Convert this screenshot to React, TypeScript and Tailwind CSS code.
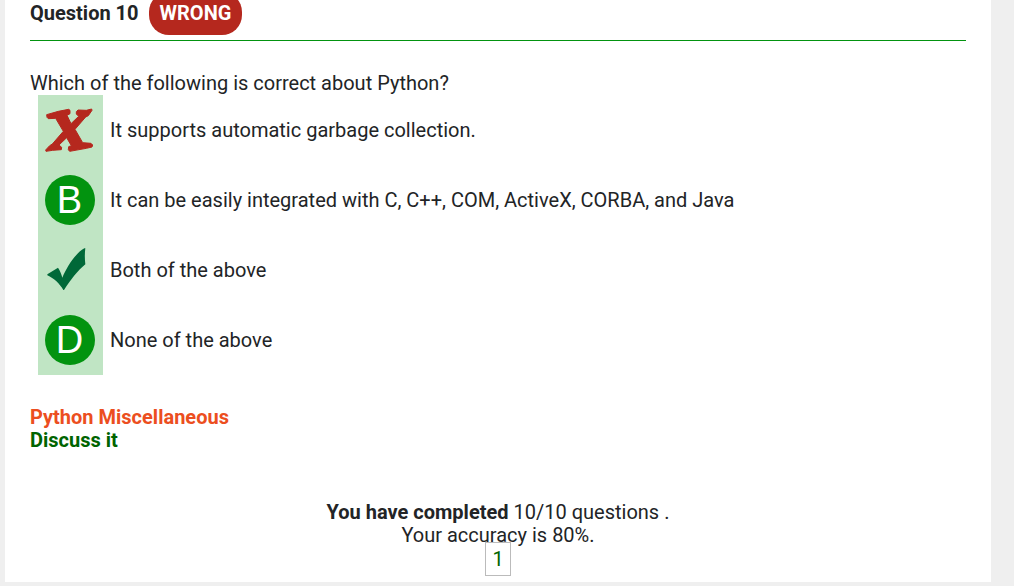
import type { ReactNode } from "react";

function CrossMark() {
  return (
    <svg viewBox="0 0 195 210" className="h-[70px] w-[65px]" role="img" aria-label="Your answer, wrong">
      <path
        fill="#b5281e"
        stroke="#b5281e"
        strokeWidth="3"
        strokeLinejoin="round"
        d="M26 59 L61 49 L92 43 L96 46 L96 56 L87 61 L99 86 L122 64 L115 57 L115 50 L120 45 L145 46 L161 42 L162 46 L151 62 L143 66 L111 103 L134 143 L159 145 L164 150 L162 156 L145 160 L95 169 L91 164 L92 155 L100 152 L86 128 L63 150 L71 157 L70 164 L44 166 L24 169 L23 165 L35 152 L43 147 L76 109 L53 70 L31 71 L27 67 Z"
      />
    </svg>
  );
}

function CheckMark() {
  return (
    <svg viewBox="0 0 195 210" className="h-[70px] w-[65px]" role="img" aria-label="Correct answer">
      <path
        fill="#006838"
        d="M28 118 L60 98 C66 107 70 117 73 128 C84 102 108 58 139 40 L142 40 C140 55 140 72 142 88 C120 106 99 133 78 165 L76 165 C65 146 48 130 28 121 Z"
      />
    </svg>
  );
}

function Letter({ children }: { children: string }) {
  return (
    <span className="mr-0.5 flex size-[50px] items-center justify-center rounded-full bg-[#02930f] font-['Liberation_Sans',sans-serif] text-[38px] leading-none text-white">
      {children}
    </span>
  );
}

function Option({ mark, text }: { mark: ReactNode; text: string }) {
  return (
    <li className="flex min-h-[70px] items-stretch">
      <div className="flex w-[65px] shrink-0 items-center justify-center bg-[#c0e5c4]">{mark}</div>
      <p className="self-center pl-[7px]">{text}</p>
    </li>
  );
}

export default function App() {
  return (
    <div className="min-h-screen bg-[#efefef] pr-[23px] pb-1 pl-[5px] font-['Roboto',sans-serif] text-[20px] leading-[23px] text-[#222426]">
      <main className="bg-white pr-[25px] pb-1.5 pl-[25px]">
        <header className="h-[41px] overflow-hidden border-b border-[#02930f]">
          <div className="flex h-[27px] items-center gap-2.5 font-bold">
            <h1>Question 10</h1>
            <span className="rounded-[20px] bg-[#b5281e] px-[11px] py-[10px] text-white">WRONG</span>
          </div>
        </header>

        <section className="pt-[31px]">
          <p>Which of the following is correct about Python?</p>
          <ol className="pl-2">
            <Option mark={<CrossMark />} text="It supports automatic garbage collection." />
            <Option
              mark={<Letter>B</Letter>}
              text="It can be easily integrated with C, C++, COM, ActiveX, CORBA, and Java"
            />
            <Option mark={<CheckMark />} text="Both of the above" />
            <Option mark={<Letter>D</Letter>} text="None of the above" />
          </ol>
        </section>

        <div className="flex flex-col items-start pt-[31px] font-bold">
          <a href="#topic" className="text-[#ec4e20]">Python Miscellaneous</a>
          <a href="#discuss" className="text-[#006400]">Discuss it</a>
        </div>

        <footer className="flex flex-col items-center pt-[49px] text-center">
          <p>
            <strong>You have completed</strong> 10/10 questions .
          </p>
          <p>Your accuracy is 80%.</p>
          <nav aria-label="Pages" className="-mt-[5px] flex">
            <a href="#page-1" className="border border-[#bbbbbb] px-[6px] py-1 leading-6 text-[#006400]">
              1
            </a>
          </nav>
        </footer>
      </main>
    </div>
  );
}
